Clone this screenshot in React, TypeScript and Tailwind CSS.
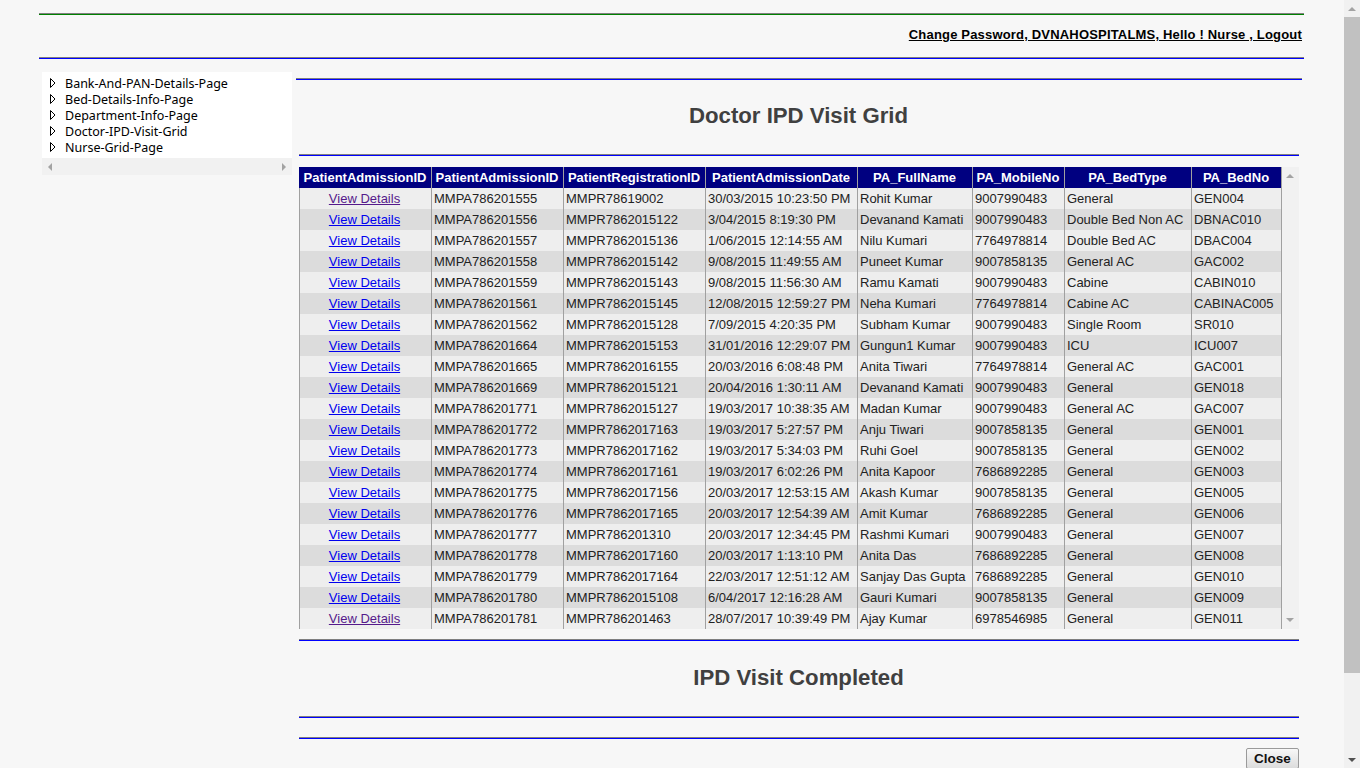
const rows = [
  ['MMPA786201555', 'MMPR78619002', '30/03/2015 10:23:50 PM', 'Rohit Kumar', '9007990483', 'General', 'GEN004'],
  ['MMPA786201556', 'MMPR7862015122', '3/04/2015 8:19:30 PM', 'Devanand Kamati', '9007990483', 'Double Bed Non AC', 'DBNAC010'],
  ['MMPA786201557', 'MMPR7862015136', '1/06/2015 12:14:55 AM', 'Nilu Kumari', '7764978814', 'Double Bed AC', 'DBAC004'],
  ['MMPA786201558', 'MMPR7862015142', '9/08/2015 11:49:55 AM', 'Puneet Kumar', '9007858135', 'General AC', 'GAC002'],
  ['MMPA786201559', 'MMPR7862015143', '9/08/2015 11:56:30 AM', 'Ramu Kamati', '9007990483', 'Cabine', 'CABIN010'],
  ['MMPA786201561', 'MMPR7862015145', '12/08/2015 12:59:27 PM', 'Neha Kumari', '7764978814', 'Cabine AC', 'CABINAC005'],
  ['MMPA786201562', 'MMPR7862015128', '7/09/2015 4:20:35 PM', 'Subham Kumar', '9007990483', 'Single Room', 'SR010'],
  ['MMPA786201664', 'MMPR7862015153', '31/01/2016 12:29:07 PM', 'Gungun1 Kumar', '9007990483', 'ICU', 'ICU007'],
  ['MMPA786201665', 'MMPR7862016155', '20/03/2016 6:08:48 PM', 'Anita Tiwari', '7764978814', 'General AC', 'GAC001'],
  ['MMPA786201669', 'MMPR7862015121', '20/04/2016 1:30:11 AM', 'Devanand Kamati', '9007990483', 'General', 'GEN018'],
  ['MMPA786201771', 'MMPR7862015127', '19/03/2017 10:38:35 AM', 'Madan Kumar', '9007990483', 'General AC', 'GAC007'],
  ['MMPA786201772', 'MMPR7862017163', '19/03/2017 5:27:57 PM', 'Anju Tiwari', '9007858135', 'General', 'GEN001'],
  ['MMPA786201773', 'MMPR7862017162', '19/03/2017 5:34:03 PM', 'Ruhi Goel', '9007858135', 'General', 'GEN002'],
  ['MMPA786201774', 'MMPR7862017161', '19/03/2017 6:02:26 PM', 'Anita Kapoor', '7686892285', 'General', 'GEN003'],
  ['MMPA786201775', 'MMPR7862017156', '20/03/2017 12:53:15 AM', 'Akash Kumar', '9007858135', 'General', 'GEN005'],
  ['MMPA786201776', 'MMPR7862017165', '20/03/2017 12:54:39 AM', 'Amit Kumar', '7686892285', 'General', 'GEN006'],
  ['MMPA786201777', 'MMPR786201310', '20/03/2017 12:34:45 PM', 'Rashmi Kumari', '9007990483', 'General', 'GEN007'],
  ['MMPA786201778', 'MMPR7862017160', '20/03/2017 1:13:10 PM', 'Anita Das', '7686892285', 'General', 'GEN008'],
  ['MMPA786201779', 'MMPR7862017164', '22/03/2017 12:51:12 AM', 'Sanjay Das Gupta', '7686892285', 'General', 'GEN010'],
  ['MMPA786201780', 'MMPR7862015108', '6/04/2017 12:16:28 AM', 'Gauri Kumari', '9007858135', 'General', 'GEN009'],
  ['MMPA786201781', 'MMPR786201463', '28/07/2017 10:39:49 PM', 'Ajay Kumar', '6978546985', 'General', 'GEN011'],
]

const headers = [
  ['PatientAdmissionID', 'w-[132px]'],
  ['PatientAdmissionID', 'w-[132px]'],
  ['PatientRegistrationID', 'w-[142px]'],
  ['PatientAdmissionDate', 'w-[152px]'],
  ['PA_FullName', 'w-[115px]'],
  ['PA_MobileNo', 'w-[92px]'],
  ['PA_BedType', 'w-[127px]'],
  ['PA_BedNo', 'w-[90px]'],
]

const widths = ['w-[132px]', 'w-[142px]', 'w-[152px]', 'w-[115px]', 'w-[92px]', 'w-[127px]', 'w-[90px]']

const menu = ['Bank-And-PAN-Details-Page', 'Bed-Details-Info-Page', 'Department-Info-Page', 'Doctor-IPD-Visit-Grid', 'Nurse-Grid-Page']

const visited = [0, 20]

function Rule({ color = 'border-b-[#0000ff]' }: { color?: string }) {
  return <div className={`h-[2px] border-t border-t-[#808080] border-b ${color}`} />
}

function Arrow({ className }: { className: string }) {
  return <div className={`h-0 w-0 ${className}`} />
}

export default function App() {
  return (
    <div className="flex h-[768px] overflow-hidden bg-[#f7f7f7] font-['Liberation_Sans',Arial,sans-serif] text-[13px] text-black">
      <div className="w-[1344px] shrink-0 pl-[39px] pr-[40px] pt-[13px]">
        <Rule color="border-b-[#008000]" />
        <div className="flex h-[42px] items-center justify-end pb-[2px] pr-[2px] text-[13px] font-bold tracking-[0.18px] text-black underline">
          Change Password, DVNAHOSPITALMS, Hello ! Nurse , Logout
        </div>
        <Rule />

        <div className="mt-[13px] flex">
          <div className="ml-[3px] w-[250px] shrink-0">
            <div className="h-[86px] bg-white pl-[6px] pt-[4px] font-['Noto_Sans',sans-serif] text-[12.5px]">
              {menu.map((m) => (
                <div key={m} className="flex h-[16px] items-center">
                  <svg width="8" height="12" viewBox="0 0 8 12" className="mb-[3px] shrink-0">
                    <path d="M2.5 1.5 L7 6 L2.5 10.5 Z" fill="#fff" stroke="#000" />
                  </svg>
                  <span className="ml-[9px] leading-[16px]">{m}</span>
                </div>
              ))}
            </div>
            <div className="flex h-[17px] items-center justify-between bg-[#f1f1f1] px-[6px]">
              <Arrow className="border-y-[4px] border-r-[4px] border-y-transparent border-r-[#a3a3a3]" />
              <Arrow className="border-y-[4px] border-l-[4px] border-y-transparent border-l-[#a3a3a3]" />
            </div>
          </div>

          <div className="ml-[4px] flex-1 pt-[6px]">
            <div className="mr-[2px]"><Rule /></div>
            <div className="flex h-[74px] items-center justify-center pb-[2px] pr-[3px] text-[22.2px] font-bold text-[#404040]">
              Doctor IPD Visit Grid
            </div>
            <div className="ml-[3px] mr-[5px]"><Rule /></div>

            <div className="ml-[3px] mt-[11px] mr-[5px] flex">
              <div className="w-[983px] shrink-0">
                <div className="flex h-[21px] border-l border-l-[#000080] bg-[#000080] text-white">
                  {headers.map(([h, w], i) => (
                    <div key={i} className={`${w} flex shrink-0 items-center justify-center border-r border-r-[#a0a0a0] pr-[1px] font-bold`}>
                      {h}
                    </div>
                  ))}
                </div>
                {rows.map((r, i) => (
                  <div key={i} className={`flex h-[21px] border-l border-l-[#a0a0a0] ${i % 2 ? 'bg-[#dcdcdc]' : 'bg-[#eeeeee]'} text-[#222]`}>
                    <div className="flex w-[132px] shrink-0 items-center justify-center border-r border-r-[#a0a0a0] pr-[2px]">
                      <a href="#" className={`underline ${visited.includes(i) ? 'text-[#551a8b]' : 'text-[#0000ee]'}`}>View Details</a>
                    </div>
                    {r.map((c, j) => (
                      <div key={j} className={`${widths[j]} flex shrink-0 items-center overflow-hidden whitespace-nowrap border-r border-r-[#a0a0a0] pl-[2px]`}>
                        {c}
                      </div>
                    ))}
                  </div>
                ))}
              </div>
              <div className="flex w-[17px] shrink-0 flex-col items-center justify-between bg-[#f1f1f1] py-[7px] pr-[1px]">
                <Arrow className="border-x-[4px] border-b-[4px] border-x-transparent border-b-[#a3a3a3]" />
                <Arrow className="border-x-[4px] border-t-[4px] border-x-transparent border-t-[#a3a3a3]" />
              </div>
            </div>

            <div className="ml-[3px] mr-[5px] mt-[10px]"><Rule /></div>
            <div className="flex h-[75px] items-center justify-center pb-[1px] pr-[3px] text-[22.2px] font-bold text-[#404040]">
              IPD Visit Completed
            </div>
            <div className="ml-[3px] mr-[5px]"><Rule /></div>
            <div className="ml-[3px] mr-[5px] mt-[19px]"><Rule /></div>
            <div className="mr-[5px] mt-[9px] flex justify-end">
              <button className="h-[21px] w-[53px] shrink-0 rounded-[2px] border border-[#9a9a9a] bg-gradient-to-b from-[#f8f8f8] to-[#dcdcdc] text-[13.5px] font-bold text-[#111]">
                Close
              </button>
            </div>
          </div>
        </div>
      </div>

      <div className="flex w-[16px] shrink-0 flex-col bg-[#f1f1f1]">
        <div className="flex h-[17px] shrink-0 items-center justify-center">
          <Arrow className="border-x-[4px] border-b-[4px] border-x-transparent border-b-[#a3a3a3]" />
        </div>
        <div className="h-[656px] shrink-0 bg-[#c1c1c1]" />
        <div className="flex flex-1 items-end justify-center pb-[6px]">
          <Arrow className="border-x-[4px] border-t-[4px] border-x-transparent border-t-[#505050]" />
        </div>
      </div>
    </div>
  )
}
